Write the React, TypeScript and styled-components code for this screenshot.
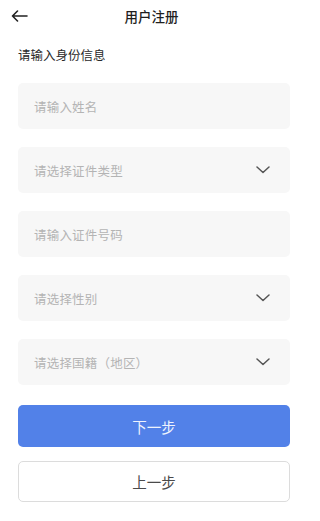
import styled, { createGlobalStyle } from 'styled-components';

const GlobalStyle = createGlobalStyle`
  html, body {
    margin: 0;
    padding: 0;
    background: #ffffff;
  }
  body {
    font-family: "Noto Sans CJK SC", "Noto Sans", sans-serif;
  }
  * {
    box-sizing: border-box;
  }
`;

const Page = styled.div`
  width: 303px;
  min-height: 521px;
  background: #ffffff;
  display: flex;
  flex-direction: column;
`;

// Top bar with back arrow and centered title
const NavBar = styled.div`
  height: 32px;
  display: grid;
  grid-template-columns: 40px 1fr 40px;
  align-items: center;
`;

const BackButton = styled.div`
  display: flex;
  align-items: center;
  padding-left: 11px;
  height: 32px;
`;

const Title = styled.div`
  text-align: center;
  font-size: 13.5px;
  font-weight: 500;
  color: #1f1f1f;
  line-height: 32px;
`;

const Content = styled.div`
  padding: 14px 13px 0 18px;
  display: flex;
  flex-direction: column;
`;

const SectionLabel = styled.div`
  font-size: 12.5px;
  color: #2a2a2a;
  line-height: 18px;
  margin-bottom: 19px;
`;

const FieldList = styled.div`
  display: flex;
  flex-direction: column;
  gap: 18px;
`;

const Field = styled.div`
  height: 46px;
  border-radius: 5px;
  background: #f7f7f7;
  display: flex;
  align-items: center;
  justify-content: space-between;
  padding: 0 20px 0 16px;
`;

const Placeholder = styled.span`
  font-size: 12.5px;
  color: #b4b4b4;
  letter-spacing: 0.2px;
`;

const Buttons = styled.div`
  margin-top: 20px;
  display: flex;
  flex-direction: column;
  gap: 14px;
`;

const Button = styled.div<{ primary?: boolean }>`
  height: ${(p) => (p.primary ? '42px' : '41px')};
  border-radius: 5px;
  display: flex;
  align-items: center;
  justify-content: center;
  font-size: 14.5px;
  background: ${(p) => (p.primary ? '#5281e8' : '#ffffff')};
  color: ${(p) => (p.primary ? '#eef3fd' : '#4a4a4a')};
  border: ${(p) => (p.primary ? 'none' : '1px solid #dcdcdc')};
`;

const Chevron = () => (
  <svg width="14" height="8" viewBox="0 0 14 8" fill="none">
    <path d="M1 1L7 6.5L13 1" stroke="#555" strokeWidth="1.5" strokeLinecap="round" strokeLinejoin="round" />
  </svg>
);

const BackArrow = () => (
  <svg width="17" height="12" viewBox="0 0 17 12" fill="none">
    <path d="M16 6H1.5M6.5 1L1.5 6L6.5 11" stroke="#222" strokeWidth="1.6" strokeLinecap="round" strokeLinejoin="round" />
  </svg>
);

const fields: { label: string; select: boolean }[] = [
  { label: '请输入姓名', select: false },
  { label: '请选择证件类型', select: true },
  { label: '请输入证件号码', select: false },
  { label: '请选择性别', select: true },
  { label: '请选择国籍（地区）', select: true },
];

export default function App() {
  return (
    <>
      <GlobalStyle />
      <Page>
        <NavBar>
          <BackButton>
            <BackArrow />
          </BackButton>
          <Title>用户注册</Title>
          <div />
        </NavBar>
        <Content>
          <SectionLabel>请输入身份信息</SectionLabel>
          <FieldList>
            {fields.map((f) => (
              <Field key={f.label}>
                <Placeholder>{f.label}</Placeholder>
                {f.select && <Chevron />}
              </Field>
            ))}
          </FieldList>
          <Buttons>
            <Button primary>下一步</Button>
            <Button>上一步</Button>
          </Buttons>
        </Content>
      </Page>
    </>
  );
}
